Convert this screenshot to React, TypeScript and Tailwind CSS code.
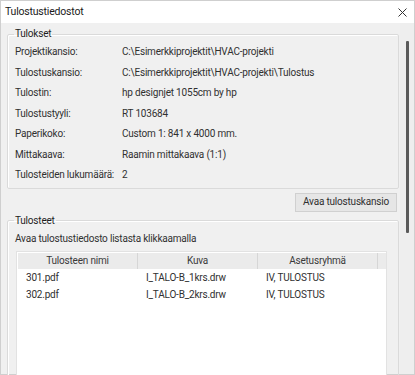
import React from "react";

const rows: [string, string][] = [
  ["Projektikansio:", "C:\\Esimerkkiprojektit\\HVAC-projekti"],
  ["Tulostuskansio:", "C:\\Esimerkkiprojektit\\HVAC-projekti\\Tulostus"],
  ["Tulostin:", "hp designjet 1055cm by hp"],
  ["Tulostustyyli:", "RT 103684"],
  ["Paperikoko:", "Custom 1: 841 x 4000 mm."],
  ["Mittakaava:", "Raamin mittakaava (1:1)"],
  ["Tulosteiden lukumäärä:", "2"],
];

const files = [
  ["301.pdf", "I_TALO-B_1krs.drw", "IV, TULOSTUS"],
  ["302.pdf", "I_TALO-B_2krs.drw", "IV, TULOSTUS"],
];

function GroupBox({ title, children, className }: { title: string; children: React.ReactNode; className?: string }) {
  return (
    <fieldset className={"border border-[#dadada] rounded-[2px] px-[7px] shadow-[inset_1px_1px_0_#fff] " + (className ?? "")}>
      <legend className="px-[1px] ml-[-1px] leading-[14px] text-[#1e1e1e]">{title}</legend>
      {children}
    </fieldset>
  );
}

export default function App() {
  return (
    <div
      className="w-[415px] h-[375px] overflow-hidden bg-white text-[10px] tracking-[-0.2px] leading-[14px] text-[#262626]"
      style={{ fontFamily: 'Roboto, "Noto Sans", sans-serif' }}
    >
      <div className="h-full border border-[#cfcfcf] flex flex-col">
        <div className="h-[22px] shrink-0 bg-white flex items-center justify-between pl-[4px] pr-[7px] text-[#1a1a1a]">
          <span className="text-[10.5px]">Tulostustiedostot</span>
          <svg width="9" height="9" viewBox="0 0 9 9">
            <path d="M0.5 0.5L8.5 8.5M8.5 0.5L0.5 8.5" stroke="#333" strokeWidth="1" />
          </svg>
        </div>
        <div className="flex-1 bg-[#f0f0f0] flex min-h-0">
          <div className="flex-1 pl-[6px] pr-[1px] pt-[4px] flex flex-col min-w-0">
            <GroupBox title="Tulokset" className="pb-[2px]">
              <div className="flex flex-col pt-[1px]">
                {rows.map(([k, v]) => (
                  <div key={k} className="h-[20.5px] flex items-center text-[#303030] whitespace-nowrap">
                    <span className="min-w-[107px] pr-[6px] shrink-0">{k}</span>
                    <span>{v}</span>
                  </div>
                ))}
              </div>
            </GroupBox>
            <div className="flex justify-end mt-[4px] pr-[2px]">
              <button className="h-[19px] px-[7px] border border-[#d0d0d0] bg-[#e6e6e6] text-[#303030] leading-none">
                Avaa tulostuskansio
              </button>
            </div>
            <GroupBox title="Tulosteet" className="mt-[2px] flex-1 pb-[0px]">
              <div className="mt-[4px] text-[#303030]">Avaa tulostustiedosto listasta klikkaamalla</div>
              <div className="mt-[5px] ml-[1px] mr-[4px] h-[140px] bg-white border border-[#e2e2e2] pl-[1px] pt-[1px]">
                <div className="flex h-[16px] bg-[#ebebeb] text-[#3a3a3a]">
                  <div className="w-[120px] flex items-center justify-center border-r border-[#d6d6d6]">Tulosteen nimi</div>
                  <div className="w-[120px] flex items-center justify-center border-r border-[#d6d6d6]">Kuva</div>
                  <div className="w-[120px] flex items-center justify-center border-r border-[#d6d6d6]">Asetusryhmä</div>
                  <div className="flex-1" />
                </div>
                <div className="pt-[1px]">
                  {files.map((f) => (
                    <div key={f[0]} className="flex h-[17px] items-center text-[#303030]">
                      <div className="w-[120px] pl-[8px]">{f[0]}</div>
                      <div className="w-[120px] pl-[8px]">{f[1]}</div>
                      <div className="w-[120px] pl-[8px]">{f[2]}</div>
                    </div>
                  ))}
                </div>
              </div>
            </GroupBox>
          </div>
          <div className="w-[14px] shrink-0 flex justify-center pt-[18px] bg-[#eeeeee]">
            <div className="w-[3px] h-[192px] bg-[#5a5a5a] rounded-[1px]" />
          </div>
        </div>
      </div>
    </div>
  );
}
